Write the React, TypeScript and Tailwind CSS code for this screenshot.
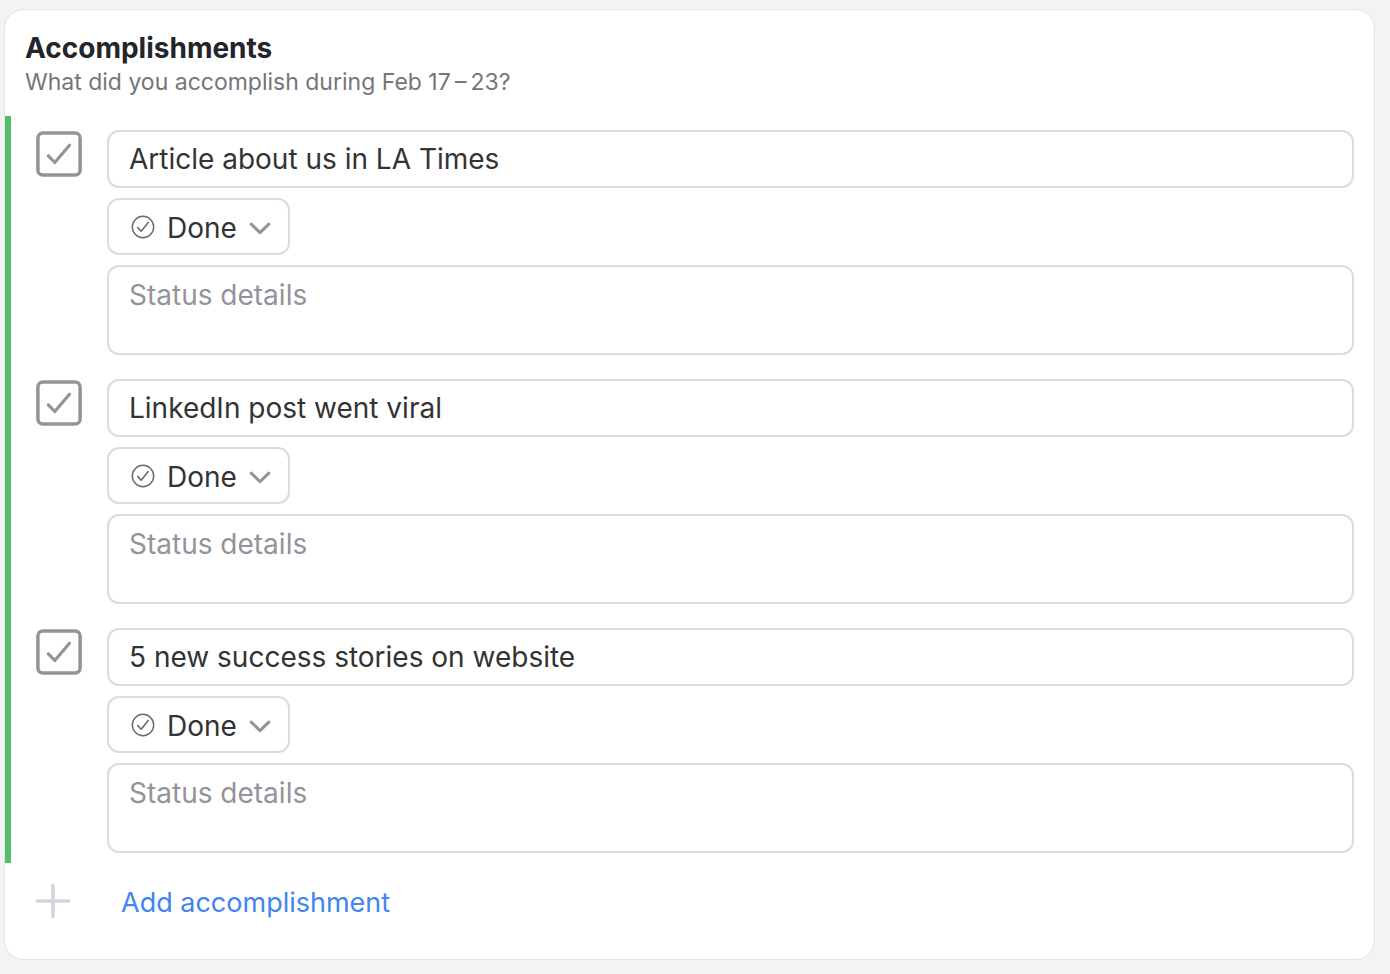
import React, { useState } from 'react';

type Status = 'Done' | 'In progress' | 'Blocked';

interface Accomplishment {
  id: number;
  title: string;
  status: Status;
  details: string;
  checked: boolean;
}

const initialItems: Accomplishment[] = [
  { id: 1, title: 'Article about us in LA Times', status: 'Done', details: '', checked: true },
  { id: 2, title: 'LinkedIn post went viral', status: 'Done', details: '', checked: true },
  { id: 3, title: '5 new success stories on website', status: 'Done', details: '', checked: true },
];

const fieldClass =
  'block w-full rounded-xl border-2 border-[#dcdcdd] bg-white px-5 text-[28px] outline-none focus:border-blue-400';

interface RowProps {
  item: Accomplishment;
  onChange: (changes: Partial<Accomplishment>) => void;
}

const AccomplishmentRow: React.FC<RowProps> = ({ item, onChange }) => {
  return (
    <li className="flex items-start gap-[25px] pt-[14px] pb-[10px] pl-[25px] pr-5">
      <label className="relative mt-px block size-[46px] shrink-0">
        <input
          type="checkbox"
          aria-label={`Include ${item.title || 'accomplishment'}`}
          checked={item.checked}
          onChange={(e) => onChange({ checked: e.target.checked })}
          className="block size-full appearance-none rounded-md"
        />
        <svg viewBox="0 0 46 46" className="pointer-events-none absolute inset-0 size-full" fill="none" stroke="#93939b" strokeLinecap="round" strokeLinejoin="round" aria-hidden="true">
          <rect x="1.9" y="1.9" width="42.2" height="42.2" rx="5" strokeWidth="3.5" />
          {item.checked && <path d="M12.3 24.8L18.8 31.5L33.5 14.3" strokeWidth="3.2" />}
        </svg>
      </label>

      <div className="flex min-w-0 flex-1 flex-col gap-[10px]">
        <input
          type="text"
          aria-label="Accomplishment"
          value={item.title}
          onChange={(e) => onChange({ title: e.target.value })}
          className={`${fieldClass} h-[58px] text-[#333333]`}
        />

        <label className="relative block w-[183px]">
          <select
            aria-label="Status"
            value={item.status}
            onChange={(e) => onChange({ status: e.target.value as Status })}
            className="block h-[57px] w-full appearance-none rounded-xl border-2 border-[#dcdcdd] bg-white pt-[2px] pl-[58px] pr-10 text-[28px] text-[#333333] outline-none"
          >
            <option>Done</option>
            <option>In progress</option>
            <option>Blocked</option>
          </select>
          <svg viewBox="0 0 24 24" className="pointer-events-none absolute top-[17px] left-6 size-6" fill="none" stroke="#6b6b70" strokeLinecap="round" strokeLinejoin="round" aria-hidden="true">
            <circle cx="12" cy="12" r="10.7" strokeWidth="1.5" />
            <path d="M6.8 12.6L10.2 16.2L17.2 7.5" strokeWidth="1.6" />
          </svg>
          <svg viewBox="0 0 24 16" className="pointer-events-none absolute top-[22px] right-[18px] h-4 w-6" fill="none" aria-hidden="true">
            <path d="M3.2 4.2L12 12.6L20.8 4.2" stroke="#93939b" strokeWidth="3" strokeLinecap="round" strokeLinejoin="round" />
          </svg>
        </label>

        <textarea
          aria-label="Status details"
          placeholder="Status details"
          value={item.details}
          onChange={(e) => onChange({ details: e.target.value })}
          className={`${fieldClass} h-[90px] resize-none pt-[10px] pb-2 leading-9 text-[#333333] placeholder:text-[#93939b]`}
        />
      </div>
    </li>
  );
};

const App: React.FC = () => {
  const [items, setItems] = useState<Accomplishment[]>(initialItems);

  const updateItem = (id: number, changes: Partial<Accomplishment>) => {
    setItems(items.map((item) => (item.id === id ? { ...item, ...changes } : item)));
  };

  const addItem = () => {
    setItems([...items, { id: Date.now(), title: '', status: 'Done', details: '', checked: true }]);
  };

  return (
    <main className="min-h-screen bg-[#f2f3f5] pt-[9px] pr-[15px] pb-[14px] pl-1 font-['Inter',sans-serif]">
      <section className="rounded-[20px] border border-[#e4e5e9] bg-white pb-9">
        {/* Heading */}
        <header className="px-5 pt-5 pb-[18px]">
          <h2 className="text-[28px] leading-9 font-bold text-[#22252b]">Accomplishments</h2>
          <p className="text-[23px] leading-8 text-[#75757a]">
            What did you accomplish during Feb 17{'\u2009'}–{'\u2009'}23?
          </p>
        </header>

        {/* Items */}
        <ul className="border-l-[6px] border-[#53bf6b]">
          {items.map((item) => (
            <AccomplishmentRow key={item.id} item={item} onChange={(changes) => updateItem(item.id, changes)} />
          ))}
        </ul>

        {/* Add new */}
        <button type="button" onClick={addItem} className="mt-5 flex items-start gap-[50px] pl-[30px] text-[27px] leading-10 text-[#4285f0]">
          <svg viewBox="0 0 36 36" className="size-9" fill="none" stroke="#d3d5db" strokeWidth="3.6" strokeLinecap="round" aria-hidden="true">
            <path d="M18 2.2V33.8M2.2 18H33.8" />
          </svg>
          Add accomplishment
        </button>
      </section>
    </main>
  );
};

export default App;
